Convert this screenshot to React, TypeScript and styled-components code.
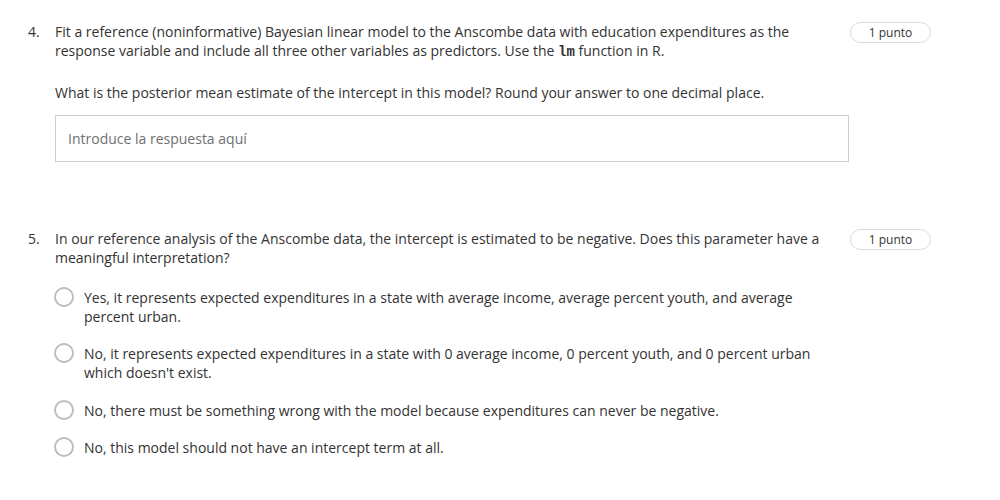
import React from 'react';
import styled, { createGlobalStyle } from 'styled-components';

const GlobalStyle = createGlobalStyle`
  body {
    margin: 0;
    background: #ffffff;
    font-family: 'Open Sans', 'Noto Sans', sans-serif;
    color: #333333;
  }
`;

const Page = styled.div`
  width: 1000px;
  padding: 22px 0 0 28px;
  box-sizing: border-box;
  display: flex;
  flex-direction: column;
  gap: 67px;
`;

const Question = styled.div`
  display: grid;
  grid-template-columns: 26px 794px 81px;
  column-gap: 1px;
  align-items: start;
`;

const Number = styled.div`
  font-size: 14px;
  line-height: 19px;
  margin-top: -0.5px;
`;

const Body = styled.div`
  display: flex;
  flex-direction: column;
`;

const Prompt = styled.p<{ $gap?: number }>`
  margin: -0.5px 0 ${(p) => p.$gap ?? 0}px 0;
  font-size: 14px;
  line-height: 19px;
`;

const Code = styled.code`
  font-family: 'Liberation Mono', 'DejaVu Sans Mono', monospace;
  font-size: 14px;
  font-weight: 700;
  line-height: 1;
`;

const Points = styled.div`
  height: 21px;
  box-sizing: border-box;
  border: 1px solid #dcdcdc;
  border-radius: 11px;
  font-size: 12px;
  line-height: 19px;
  text-align: center;
  color: #333333;
`;

const AnswerInput = styled.input`
  width: 794px;
  height: 47px;
  box-sizing: border-box;
  border: 1px solid #c9cdd5;
  padding: 0 12px;
  font-family: 'Open Sans', 'Noto Sans', sans-serif;
  font-size: 14px;
  color: #333333;
  outline: none;

  &::placeholder {
    color: #6f6f6f;
  }
`;

const Options = styled.div`
  display: flex;
  flex-direction: column;
  gap: 18.5px;
  margin-left: -1px;
  margin-top: 21px;
`;

const Option = styled.label`
  display: flex;
  align-items: flex-start;
  gap: 10px;
  font-size: 14px;
  line-height: 19px;
  cursor: pointer;
`;

const Radio = styled.span`
  flex: none;
  width: 20px;
  height: 20px;
  box-sizing: border-box;
  border: 2px solid #bdbdbd;
  border-radius: 50%;
  margin-top: -1px;
`;

const OptionText = styled.span`
  max-width: 745px;
`;

const options = [
  'Yes, it represents expected expenditures in a state with average income, average percent youth, and average percent urban.',
  "No, it represents expected expenditures in a state with 0 average income, 0 percent youth, and 0 percent urban which doesn't exist.",
  'No, there must be something wrong with the model because expenditures can never be negative.',
  'No, this model should not have an intercept term at all.',
];

export default function App() {
  return (
    <>
      <GlobalStyle />
      <Page>
        <Question>
          <Number>4.</Number>
          <Body>
            <Prompt $gap={24}>
              Fit a reference (noninformative) Bayesian linear model to the Anscombe data with education
              expenditures as the response variable and include all three other variables as predictors. Use the{' '}
              <Code>lm</Code> function in R.
            </Prompt>
            <Prompt $gap={13}>
              What is the posterior mean estimate of the intercept in this model? Round your answer to one decimal
              place.
            </Prompt>
            <AnswerInput placeholder="Introduce la respuesta aquí" />
          </Body>
          <Points>1 punto</Points>
        </Question>

        <Question>
          <Number>5.</Number>
          <Body>
            <Prompt>
              In our reference analysis of the Anscombe data, the intercept is estimated to be negative. Does this
              parameter have a meaningful interpretation?
            </Prompt>
            <Options>
              {options.map((o) => (
                <Option key={o}>
                  <Radio />
                  <OptionText>{o}</OptionText>
                </Option>
              ))}
            </Options>
          </Body>
          <Points>1 punto</Points>
        </Question>
      </Page>
    </>
  );
}
